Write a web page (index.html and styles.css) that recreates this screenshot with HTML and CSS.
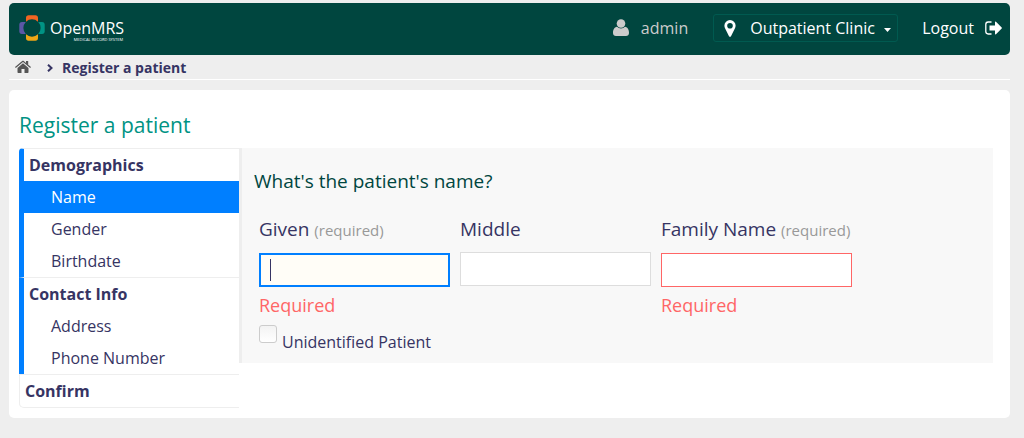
FILE: index.html
```html
<!DOCTYPE html>
<html lang="en">
<head>
    <meta charset="UTF-8">
    <title>OpenMRS - Register a patient</title>
    <link rel="stylesheet" href="styles.css">
</head>
<body>

<header class="header">
    <a class="logo" href="#">
        <svg class="logo-mark" width="26" height="26" viewBox="0 0 26 26">
            <path fill="#f26522" d="M7 3C7 1 8 .5 9.500 .3h7C18 .5 19 1 19 3v3.800A8.600 8.600 0 0 0 7 6.800z"/>
            <path fill="#009384" d="M23 7c2 0 2.500 1 2.700 2.500v7c-.2 1.500-.7 2.500-2.700 2.500h-3.800a8.600 8.600 0 0 0 0-12z"/>
            <path fill="#eea616" d="M7 23c0 2 1 2.500 2.500 2.700h7c1.500-.2 2.500-.7 2.500-2.700v-3.800a8.600 8.600 0 0 1-12 0z"/>
            <path fill="#5b57a6" d="M3 7C1 7 .5 8 .3 9.500v7C.5 18 1 19 3 19h3.800a8.600 8.600 0 0 1 0-12z"/>
        </svg>
        <span class="logo-text">
            <span class="logo-name">OpenMRS</span>
            <span class="logo-tag">MEDICAL RECORD SYSTEM</span>
        </span>
    </a>
    <nav class="user-options">
        <a class="user" href="#">
            <svg width="16" height="18" viewBox="0 0 16 18" fill="currentColor">
                <circle cx="8" cy="4.500" r="4.300"/>
                <path d="M4 7.800C1.200 8.200 0 11 0 14c0 2 1.200 3 3 3h10c1.800 0 3-1 3-3 0-3-1.200-5.800-4-6.200a5.600 5.600 0 0 1-8 0z"/>
            </svg>
            admin
        </a>
        <label class="location">
            <svg width="12" height="17" viewBox="0 0 12 17" fill="currentColor">
                <path fill-rule="evenodd" d="M6 0a5.600 5.600 0 0 1 5.600 5.600c0 1-.2 1.600-.5 2.300L7 16.200c-.4.800-1.600.8-2 0L.9 7.900C.6 7.200.4 6.600.4 5.600A5.600 5.600 0 0 1 6 0zm0 2.900a2.800 2.800 0 1 0 0 5.600 2.800 2.800 0 0 0 0-5.600z"/>
            </svg>
            <select class="location-select" aria-label="Location">
                <option>Outpatient Clinic</option>
            </select>
            <svg class="caret" width="7" height="4" viewBox="0 0 7 4" fill="currentColor">
                <path d="M0 0h7L3.500 4z"/>
            </svg>
        </label>
        <a class="logout" href="#">
            Logout
            <svg width="17" height="14" viewBox="0 0 17 14">
                <path fill="none" stroke="currentColor" stroke-width="1.300" d="M6.500 1H3.200C1.600 1 .8 2 .8 3.400v7.200C.8 12 1.600 13 3.200 13h3.300"/>
                <path fill="currentColor" d="M4.500 4.500H10V1.200c0-.6.6-.8 1-.4l5.700 5.600c.3.300.3.900 0 1.200L11 13.200c-.4.400-1 .2-1-.4V9.500H4.500z"/>
            </svg>
        </a>
    </nav>
</header>

<nav class="breadcrumbs">
    <a class="home" href="#" aria-label="Home">
        <svg width="16" height="14" viewBox="0 0 16 14" fill="currentColor">
            <path d="M8 3.300l5.500 4.600v4.400c0 .5-.3.700-.7.700H9.500V9h-3v4H3.200c-.4 0-.7-.2-.7-.7V7.900z"/>
            <path d="M0 7.100L7.200 1c.5-.4 1.100-.4 1.600 0L11 2.900V1h2.200v3.700L16 7.100l-.8.900L8 2.100.8 8z"/>
        </svg>
    </a>
    <svg class="chevron" width="6" height="8" viewBox="0 0 6 8">
        <path fill="none" stroke="currentColor" stroke-width="2" d="M1 .7L4.500 4 1 7.300"/>
    </svg>
    <span>Register a patient</span>
</nav>

<main class="content">
    <h2>Register a patient</h2>
    <div class="wizard">
        <ul class="sections">
            <li class="section active">
                <span class="section-title">Demographics</span>
                <ul>
                    <li class="current"><a href="#">Name</a></li>
                    <li><a href="#">Gender</a></li>
                    <li><a href="#">Birthdate</a></li>
                </ul>
            </li>
            <li class="section active">
                <span class="section-title">Contact Info</span>
                <ul>
                    <li><a href="#">Address</a></li>
                    <li><a href="#">Phone Number</a></li>
                </ul>
            </li>
            <li class="section">
                <span class="section-title">Confirm</span>
            </li>
        </ul>

        <form class="question">
            <h3>What's the patient's name?</h3>
            <div class="fields">
                <div class="field">
                    <label for="given">Given <small>(required)</small></label>
                    <input type="text" class="focused" id="given">
                    <span class="error">Required</span>
                </div>
                <div class="field">
                    <label for="middle">Middle</label>
                    <input type="text" id="middle">
                </div>
                <div class="field">
                    <label for="family">Family Name <small>(required)</small></label>
                    <input type="text" class="invalid" id="family">
                    <span class="error">Required</span>
                </div>
            </div>
            <div class="unidentified">
                <input type="checkbox" id="unknown">
                <label for="unknown">Unidentified Patient</label>
            </div>
        </form>
    </div>
</main>

</body>
</html>
```

FILE: styles.css
```css
* {
    box-sizing: border-box;
}
body {
    margin: 3px 14px 20px 9px;
    background-color: #eee;
    color: #363463;
    font-family: "Open Sans", sans-serif;
    font-size: 16px;
}
a {
    color: inherit;
    text-decoration: none;
}
ul {
    list-style: none;
    margin: 0;
    padding: 0;
}
svg {
    display: block;
    flex: none;
}

/* header */
.header {
    display: flex;
    justify-content: space-between;
    align-items: center;
    height: 52px;
    padding: 0 8px 2px 10px;
    background-color: #00463f;
    border-radius: 5px;
    color: #fff;
}
.logo {
    display: flex;
    align-items: center;
    gap: 5px;
}
.logo-text {
    display: flex;
    flex-direction: column;
    padding-top: 3px;
}
.logo-name {
    font-size: 16px;
    line-height: 20px;
}
.logo-tag {
    align-self: flex-end;
    padding-right: 1px;
    font-size: 4px;
    line-height: 4px;
}
.user-options,
.user,
.location,
.logout {
    display: flex;
    align-items: center;
}
.user {
    gap: 12px;
    margin-right: 25px;
    color: #ccc;
}
.location {
    height: 28px;
    padding: 0 6px 0 10px;
    border: 1px solid #005a50;
    border-radius: 3px;
}
.location-select {
    appearance: none;
    margin: 0 9px 0 14px;
    padding: 0;
    border: none;
    background: none;
    color: #fff;
    font: inherit;
}
.caret {
    margin-top: 4px;
}
.logout {
    gap: 11px;
    margin-left: 24px;
}

/* breadcrumbs */
.breadcrumbs {
    display: flex;
    align-items: center;
    height: 25px;
    padding-left: 6px;
    border-bottom: 1px solid #fff;
    font-size: 14px;
    font-weight: bold;
}
.home {
    color: #555;
}
.chevron {
    margin: 2px 9px 0 16px;
}

/* content */
.content {
    margin-top: 10px;
    padding: 20px 17px 10px 10px;
    background-color: #fff;
    border-radius: 5px;
}
h2 {
    margin: 0 0 8px;
    color: #009384;
    font-size: 21px;
    font-weight: normal;
    line-height: 30px;
}
.wizard {
    display: flex;
    align-items: flex-start;
}

.sections {
    width: 220px;
    line-height: 32px;
    border-bottom: 1px solid #eee;
    border-radius: 5px 0 0 5px;
}
.section {
    border-top: 1px solid #eee;
    border-left: 1px solid #eee;
}
.section:first-child {
    border-top-left-radius: 4px;
}
.section:last-child {
    border-bottom-left-radius: 4px;
}
.section.active {
    border-left: 5px solid #007fff;
}
.section-title {
    display: block;
    padding-left: 5px;
    font-weight: bold;
}
.section li {
    padding-left: 27px;
}
.section .current {
    background-color: #007fff;
    color: #fff;
}

.question {
    flex: 1;
    padding: 18px 12px 10px;
    background-color: #f8f8f8;
    border-left: 3px solid #eee;
}
h3 {
    margin: 0 0 16px;
    color: #00463f;
    font-size: 19px;
    font-weight: normal;
    line-height: 30px;
}
.fields {
    display: flex;
    gap: 10px;
    padding-left: 5px;
}
.field {
    display: flex;
    flex-direction: column;
    width: 191px;
    white-space: nowrap;
}
.field label {
    margin-bottom: 6px;
    font-size: 19px;
    line-height: 34px;
}
.field small {
    color: #999;
    font-size: 15px;
}
.field input {
    height: 34px;
    padding: 0 9px;
    border: 1px solid #ddd;
    background-color: #fff;
    color: inherit;
    font: inherit;
    outline: none;
}
/* active field with its text cursor */
.field .focused {
    border: 2px solid #007fff;
    background: linear-gradient(#363463, #363463) 9px center / 1px 22px no-repeat #fffdf7;
}
.field .invalid {
    border-color: #ff6666;
}
.error {
    margin-top: 6px;
    color: #ff6666;
    font-size: 18px;
    line-height: 24px;
}
.unidentified {
    display: flex;
    gap: 5px;
    padding: 8px 0 0 5px;
}
.unidentified input {
    appearance: none;
    width: 18px;
    height: 18px;
    margin: 0;
    border: 1px solid #ccc;
    border-radius: 3px;
    background: linear-gradient(#f3f3f3, #fff);
}
.unidentified label {
    padding-top: 6px;
    line-height: 22px;
}
```
